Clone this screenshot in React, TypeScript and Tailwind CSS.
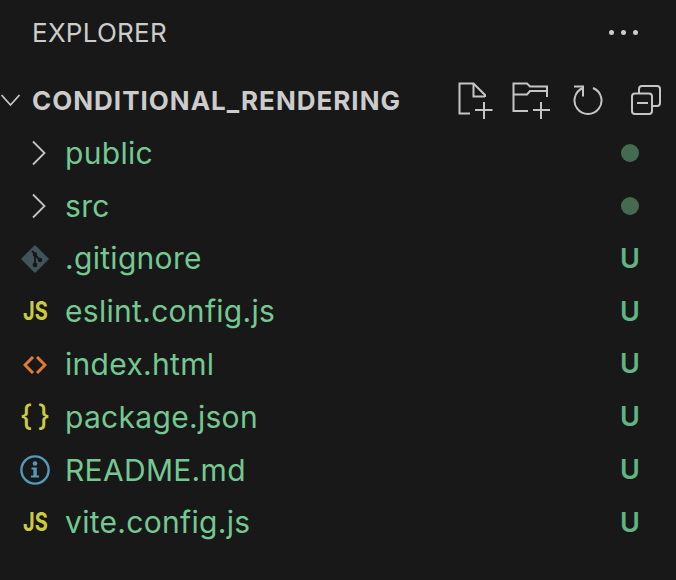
import React from 'react'

const FONT = "font-['Inter','Liberation_Sans',sans-serif]"

const Chevron = () => (
  <svg width="16" height="26" viewBox="0 0 16 26" fill="none" stroke="#c5c5c5" strokeWidth="1.8" className="ml-[10px]">
    <path d="M1 1.5 L12.5 13 L1 24.5" />
  </svg>
)

const JsIcon = () => (
  <span className="text-[25px] font-bold leading-none scale-x-[.8] text-[#cbcb41]">JS</span>
)

const GitIcon = () => (
  <svg width="28" height="28" viewBox="0 0 28 28">
    <path d="M14 1 L27 14 L14 27 L1 14 Z" fill="#41535b" stroke="#41535b" strokeWidth="1.5" strokeLinejoin="round" />
    <path d="M11 6 L14 9 L14 20 M14 10 L19 15" stroke="#181818" strokeWidth="1.8" fill="none" />
    <circle cx="14" cy="20" r="2.4" fill="#181818" />
    <circle cx="19" cy="15" r="2.2" fill="#181818" />
    <circle cx="14" cy="9.5" r="2.2" fill="#181818" />
  </svg>
)

const HtmlIcon = () => (
  <svg width="24" height="18" viewBox="0 0 24 18" fill="none" stroke="#e37933" strokeWidth="3">
    <path d="M10 1 L2 9 L10 17" />
    <path d="M14 1 L22 9 L14 17" />
  </svg>
)

const JsonIcon = () => (
  <span className="flex gap-[5px] -translate-y-[2px] text-[29px] font-medium leading-none whitespace-nowrap text-[#cbcb41]">
    <span>{'{'}</span>
    <span>{'}'}</span>
  </span>
)

const InfoIcon = () => (
  <svg width="30" height="30" viewBox="0 0 30 30" fill="none">
    <circle cx="15" cy="15" r="13.6" stroke="#519aba" strokeWidth="2.4" />
    <circle cx="15" cy="8.5" r="2.3" fill="#519aba" />
    <path d="M11.5 12.5 H16.8 V20.5 H19 V22.5 H11 V20.5 H13.4 V14.5 H11.5 Z" fill="#519aba" />
  </svg>
)

const NewFile = () => (
  <svg width="35" height="37" viewBox="0 0 35 37" fill="none" stroke="#c5c5c5" strokeWidth="2">
    <path d="M12 31.5 H1.5 V1.5 H15.5 L27 13 V15" />
    <path d="M15.5 1.5 V14.5 H27" />
    <path d="M26 20 V37 M17 28 H34.5" />
  </svg>
)

const NewFolder = () => (
  <svg width="38" height="37" viewBox="0 0 38 37" fill="none" stroke="#c5c5c5" strokeWidth="2">
    <path d="M16 29 H1.5 V1.5 H15 L18 4.5 H35 V15" />
    <path d="M1.5 12.5 H15 L18 9 H35" />
    <path d="M29 20 V37 M21 28 H38" />
  </svg>
)

const Refresh = () => (
  <svg width="31" height="31" viewBox="0 0 31 31" fill="none" stroke="#c5c5c5" strokeWidth="2">
    <path d="M10 3 A13.5 13.5 0 1 0 20 3" />
    <path d="M1 1.5 H10 V11.5" />
  </svg>
)

const Collapse = () => (
  <svg width="30" height="30" viewBox="0 0 30 30" fill="none" stroke="#c5c5c5" strokeWidth="2">
    <rect x="1" y="8.5" width="20" height="20.5" rx="3" />
    <path d="M8 8 V4 Q8 1 11 1 H26 Q29 1 29 4 V18 Q29 21 26 21 H22" />
    <path d="M6 18 H17" />
  </svg>
)

type Row = { name: string; icon: React.ReactNode; folder?: boolean }

const rows: Row[] = [
  { name: 'public', icon: <Chevron />, folder: true },
  { name: 'src', icon: <Chevron />, folder: true },
  { name: '.gitignore', icon: <GitIcon /> },
  { name: 'eslint.config.js', icon: <JsIcon /> },
  { name: 'index.html', icon: <HtmlIcon /> },
  { name: 'package.json', icon: <JsonIcon /> },
  { name: 'README.md', icon: <InfoIcon /> },
  { name: 'vite.config.js', icon: <JsIcon /> },
]

export default function App() {
  return (
    <div className={`w-[676px] h-[580px] overflow-hidden bg-[#181818] ${FONT}`}>
      {/* Title */}
      <div className="flex items-center justify-between h-[65px] pl-[32px] pr-[38px]">
        <span className="text-[26px] tracking-[0.25px] text-[#cccccc]">EXPLORER</span>
        <div className="flex gap-[7px]">
          <span className="w-[5px] h-[5px] rounded-full bg-[#cccccc]" />
          <span className="w-[5px] h-[5px] rounded-full bg-[#cccccc]" />
          <span className="w-[5px] h-[5px] rounded-full bg-[#cccccc]" />
        </div>
      </div>

      {/* Workspace root */}
      <div className="flex items-center h-[62px] pt-[8px]">
        <svg width="20" height="13" viewBox="0 0 20 13" fill="none" stroke="#c5c5c5" strokeWidth="1.8" className="ml-px">
          <path d="M0.5 1 L9.5 11 L18.5 1" />
        </svg>
        <span className="ml-[11px] text-[26px] tracking-[1px] font-bold text-[#cccccc]">CONDITIONAL_RENDERING</span>
        <div className="flex items-center ml-auto mr-[15px]">
          <NewFile />
          <span className="ml-[19px] flex"><NewFolder /></span>
          <span className="ml-[23px] flex"><Refresh /></span>
          <span className="ml-[27px] flex"><Collapse /></span>
        </div>
      </div>

      {/* Files */}
      <div className="flex flex-col">
        {rows.map(row => (
          <div key={row.name} className="flex items-center h-[52.8px]">
            <div className="flex items-center justify-center w-[30px] ml-[20px] shrink-0">
              {row.icon}
            </div>
            <span className="ml-[15px] text-[30px] tracking-[0.3px] text-[#73c991]">{row.name}</span>
            <div className="ml-auto mr-[34px] w-[24px] flex justify-center">
              {row.folder ? (
                <span className="w-[18px] h-[18px] rounded-full bg-[#446b4f]" />
              ) : (
                <span className="text-[27px] font-semibold text-[#5fb583]">U</span>
              )}
            </div>
          </div>
        ))}
      </div>
    </div>
  )
}
